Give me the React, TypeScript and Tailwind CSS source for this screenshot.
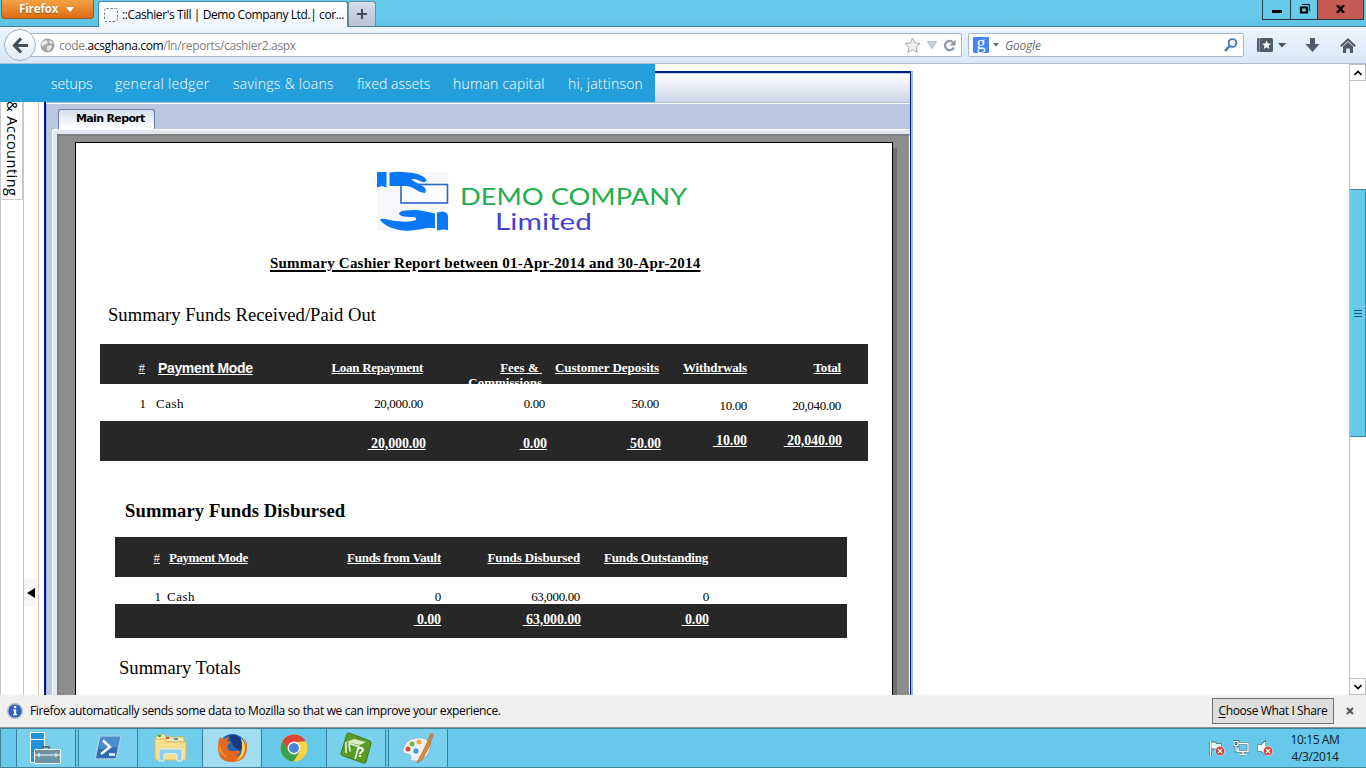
import React from "react";

const ui = "font-['Open_Sans','Noto_Sans',sans-serif]";
const serif = "font-['Liberation_Serif',serif]";

function BrowserTabs() {
  return (
    <header className="flex h-[27px] shrink-0 items-start justify-between border-b border-[#46879b] bg-linear-to-b from-[#66caea] from-60% to-[#5fbfe0]">
      <div className="flex h-[26px]">
        <div className="ml-px flex h-[19px] w-[93px] items-center gap-2 rounded-b-[4px] border border-t-0 border-[#9a5a22] bg-linear-to-b from-[#f4a243] to-[#dc6d10] pl-[17px] text-[11.5px] font-bold leading-none tracking-[-0.1px] text-white [text-shadow:0_1px_1px_#a04c00]">
          <span>Firefox</span>
          <svg width="8" height="5" viewBox="0 0 8 5"><path d="M0 0h8L4 5z" fill="#fff" /></svg>
        </div>
        <div className="ml-[4px] mt-[1px] flex h-[26px] w-[250px] items-center rounded-t-[3px] border border-b-0 border-[#46879b] bg-linear-to-b from-white to-[#eef5fd] pl-[5px]">
          <svg className="shrink-0" width="14" height="14" viewBox="0 0 14 14"><rect x=".5" y=".5" width="13" height="13" rx="2" fill="none" stroke="#777" strokeDasharray="2.4 1.6" /></svg>
          <span className="ml-[4px] whitespace-nowrap text-[12px] leading-none tracking-[-0.4px] text-black">::Cashier's Till | Demo Company Ltd.| cor...</span>
        </div>
        <div className="mt-[1px] flex h-[25px] w-[28px] items-center justify-center rounded-t-[3px] border border-b-0 border-[#6c8fa0] bg-linear-to-b from-[#d5deea] to-[#b9c3d3]">
          <svg width="10" height="10" viewBox="0 0 10 10"><path d="M4 0h2v4h4v2H6v4H4V6H0V4h4z" fill="#3f4a56" /></svg>
        </div>
      </div>
      <div className="flex h-[20px]">
        <div className="flex w-[29px] items-center justify-center border border-t-0 border-[#283a42]">
          <svg width="10" height="8"><path d="M0 4h10v3H0z" /></svg>
        </div>
        <div className="flex w-[26px] items-center justify-center border-b border-[#283a42] pb-[2px]">
          <svg width="11" height="11"><path d="M3 1.5h7.5V8" fill="none" stroke="#000" /><path d="M2 4.5h6v5H2z" fill="none" stroke="#000" strokeWidth="2.2" /></svg>
        </div>
        <div className="mr-[2px] flex w-[47px] items-center justify-center border border-t-0 border-[#283a42] bg-[#c45a52] pb-[2px]">
          <svg width="9" height="8"><path d="M1 0l7 8M8 0L1 8" stroke="#000" strokeWidth="2.4" /></svg>
        </div>
      </div>
    </header>
  );
}

function AddressBar() {
  return (
    <div className="flex h-[37px] shrink-0 items-center border-b border-[#a9bdd3] bg-linear-to-b from-[#edf5fd] to-[#d9e8f7]">
      <div className="z-10 ml-[4px] flex size-[32px] shrink-0 items-center justify-center rounded-full border border-[#9eb0c4] bg-linear-to-b from-white to-[#e3edf8]">
        <svg width="17" height="17" viewBox="0 0 17 17"><path d="M9 1.5L2.5 8.5L9 15.500M3 8.500H16" fill="none" stroke="#414f5e" strokeWidth="3.2" /></svg>
      </div>
      <div className="-ml-[8px] flex h-[24px] w-[934px] items-center rounded-[2px] border border-[#a5b9ce] bg-white pl-[11px]">
        <svg width="15" height="15" viewBox="0 0 15 15"><circle cx="7.500" cy="7.500" r="7" fill="#a5a5a5" /><path d="M2 4l4-2 2 2-1 2-3 1-1 2-2-2zM7 8l4-1 1 2-3 4-2-1zM10 2l3 3-2 1-2-2z" fill="#e6e6e6" /></svg>
        <span className="ml-[4px] whitespace-nowrap pt-[2px] text-[12px] leading-none tracking-[-0.34px] text-[#808080]">
          code.<span className="text-black">acsghana.com</span>/ln/reports/cashier2.aspx
        </span>
        <div className="ml-auto flex items-center gap-[6px] pr-[5px]">
          <svg width="17" height="17" viewBox="0 0 17 17"><path d="M8.500 1l2.200 5 5.300.5-4 3.700 1.200 5.300-4.700-2.800-4.700 2.800L5 10.200 1 6.500 6.300 6z" fill="#f1f1f1" stroke="#aaa" /></svg>
          <svg width="10" height="8"><path d="M.5.5h9L5 7.500z" fill="#cbd2da" stroke="#b3bcc6" /></svg>
          <svg width="13" height="13" viewBox="0 0 13 13"><path d="M9.800 3.200A4.600 4.600 0 1 0 10.800 8.500" fill="none" stroke="#8a96a4" strokeWidth="2.200" /><path d="M12.500.5v6h-6z" fill="#8a96a4" /></svg>
        </div>
      </div>
      <div className="ml-[6px] flex h-[24px] w-[276px] items-center rounded-[2px] border border-[#a5b9ce] bg-white pl-[4px] pr-[5px]">
        <div className={`flex size-[16px] items-center justify-center rounded-[1px] bg-[#4285f4] pb-[4px] text-[18px] leading-none text-white ${serif}`}>g</div>
        <svg className="ml-[4px]" width="6" height="4"><path d="M0 0h6L3 3.500z" fill="#666" /></svg>
        <span className="ml-[6px] pt-[2px] text-[12px] italic leading-none tracking-[-0.2px] text-[#6b6b6b]">Google</span>
        <svg className="ml-auto" width="14" height="14" viewBox="0 0 14 14"><circle cx="8.500" cy="5" r="3.900" fill="none" stroke="#3c76b4" strokeWidth="1.800" /><path d="M5.700 8L1 13" stroke="#3c76b4" strokeWidth="2.400" /></svg>
      </div>
      <svg className="ml-[13px]" width="16" height="14" viewBox="0 0 16 14"><rect width="16" height="14" rx="1.500" fill="#4e5d6c" /><path d="M2.500 0v14" stroke="#8c98a5" /><path d="M9.500 2.500l1.300 3 3.200.2-2.500 2 .8 3.300-2.800-1.800L6.700 11l.8-3.300-2.500-2 3.200-.2z" fill="#fff" /></svg>
      <svg className="ml-[5px]" width="8" height="5"><path d="M0 0h8L4 4.500z" fill="#44515e" /></svg>
      <svg className="ml-[19px]" width="15" height="14" viewBox="0 0 15 14"><path d="M5 0h5v6h4.500L7.500 14 .5 6H5z" fill="#4e5b69" /></svg>
      <svg className="ml-[20px]" width="16" height="15" viewBox="0 0 16 15"><path d="M.8 8.300L8 1.500l7.200 6.800" fill="none" stroke="#4e5b69" strokeWidth="2" /><path d="M3 8.500L8 4l5 4.500V15H9.800v-4.500H6.200V15H3z" fill="#4e5b69" /></svg>
    </div>
  );
}

function SiteMenu() {
  return (
    <nav className="absolute left-0 top-0 z-20 flex h-[38px] w-[655px] items-center whitespace-nowrap bg-[#259fdc] pl-[51px] text-[14px] font-light text-white">
      <span className="w-[64px] tracking-[-0.1px]">setups</span>
      <span className="w-[118px] tracking-[0.3px]">general ledger</span>
      <span className="w-[124px] tracking-[0.3px]">savings &amp; loans</span>
      <span className="w-[96px]">fixed assets</span>
      <span className="w-[115px] tracking-[0.2px]">human capital</span>
      <span className="tracking-[0.2px]">hi, jattinson</span>
    </nav>
  );
}

function Sidebar() {
  return (
    <aside className="flex w-[44px] shrink-0">
      <div className="w-[24px] border-x border-[#c9c9c9]">
        <div className="flex h-[136px] items-end justify-center border-b border-r border-[#c9c9c9] pb-[3px]">
          <span className="whitespace-nowrap text-[14.500px] leading-[18px] tracking-[0.5px] text-black [writing-mode:vertical-rl]">&amp; Accounting</span>
        </div>
      </div>
      <div className="w-[15px] border-r border-[#c9c9c9] pt-[515px]">
        <div className="flex h-[27px] items-center justify-center bg-[#f7f7f7]">
          <svg width="8" height="10"><path d="M8 0v10L0 5z" /></svg>
        </div>
      </div>
    </aside>
  );
}

function Logo() {
  return (
    <svg className="ml-[301px] mt-[28px] block" width="312" height="66" viewBox="0 0 312 66">
      <rect width="71" height="59" y="1" fill="#f5f7fa" />
      <rect x="24" y="13.500" width="46.500" height="18.500" fill="#fbfcff" stroke="#2a68c0" strokeWidth="1.600" />
      <path d="M0 1h9.500v15.500L5 15l-5 1.500z" fill="#0a78f5" />
      <path d="M12.500 1.500Q20 0 31 1.500q8 .5 12 2.500 7 3 6.500 6-2 2-5 .5L38 8l-4 .5L47 16q3 2.500 1 6l-5-1-8-4.500q-3-1.500-6-1.500h-8l-8.500 0z" fill="#0a78f5" />
      <path d="M22 42.500q1-3 7-3 10-1 17 .5l12 2.500V57l-8 0-8 1.500q-10 2-20 .5Q8 56 3 49q1-2 5-1 8 2 17 2.500 8 1 14-1.500 1-3-3-3-8 0-11-1-3-1-3-2.500z" fill="#0a78f5" />
      <path d="M60 41.500l6-1q5 1 5 5V59l-5-.5-6 1z" fill="#0a78f5" />
      <text x="83" y="34" textLength="227" lengthAdjust="spacingAndGlyphs" fontFamily="Lato, sans-serif" fontSize="23.500" fill="#22ae50">DEMO COMPANY</text>
      <text x="118" y="59" textLength="97" lengthAdjust="spacingAndGlyphs" fontFamily="Lato, sans-serif" fontSize="22.500" fill="#4343cf">Limited</text>
    </svg>
  );
}

type CellProps = { className: string; children?: React.ReactNode };
const Cell = ({ className, children }: CellProps) => (
  <div className={`shrink-0 whitespace-pre text-right ${className}`}>{children}</div>
);

function FundsReceived() {
  const value = "text-[13px] tracking-[-0.35px]";
  return (
    <section className="ml-[24px] w-[768px] leading-[15px]">
      <div className="flex h-[40px] overflow-hidden bg-[#272727] pt-[16px] text-[13px] font-bold text-white underline">
        <Cell className="w-[45px] font-normal">#</Cell>
        <Cell className="w-[13px]" />
        <div className="w-[160px] pt-px font-['Liberation_Sans',sans-serif] text-[14px] tracking-[-0.35px]">Payment Mode</div>
        <Cell className="w-[105px] tracking-[-0.3px]">Loan Repayment</Cell>
        <Cell className="w-[119px]">{"Fees & \nCommissions"}</Cell>
        <Cell className="w-[117px] tracking-[-0.05px]">Customer Deposits</Cell>
        <Cell className="w-[88px] tracking-[-0.15px]">Withdrwals</Cell>
        <Cell className="w-[94px] tracking-[-0.2px]">Total</Cell>
      </div>
      <div className="flex h-[37px] pt-[12px] text-[13px] text-black">
        <Cell className="w-[46px]">1</Cell>
        <Cell className="w-[10px]" />
        <div className="w-[100px] tracking-[0.5px]">Cash</div>
        <Cell className={`w-[167px] ${value}`}>20,000.00</Cell>
        <Cell className={`w-[122px] ${value}`}>0.00</Cell>
        <Cell className={`w-[114px] ${value}`}>50.00</Cell>
        <Cell className={`w-[88px] pt-[2px] ${value}`}>10.00</Cell>
        <Cell className={`w-[94px] pt-[2px] ${value}`}>20,040.00</Cell>
      </div>
      <div className="flex h-[40px] bg-[#272727] pt-[12px] text-[14px] font-bold tracking-[-0.12px] text-white underline">
        <Cell className="w-[326px] pt-[3px]"> 20,000.00</Cell>
        <Cell className="w-[121px] pt-[3px]"> 0.00</Cell>
        <Cell className="w-[114px] pt-[3px]"> 50.00</Cell>
        <Cell className="w-[86px]"> 10.00</Cell>
        <Cell className="w-[95px]"> 20,040.00</Cell>
      </div>
    </section>
  );
}

function FundsDisbursed() {
  const value = "text-[13px] tracking-[-0.35px]";
  return (
    <section className="ml-[39px] w-[732px] leading-[15px]">
      <div className="flex h-[40px] bg-[#272727] pt-[13px] text-[13px] font-bold text-white underline">
        <Cell className="w-[45px] font-normal">#</Cell>
        <Cell className="w-[9px]" />
        <div className="w-[100px] tracking-[-0.45px]">Payment Mode</div>
        <Cell className="w-[172px] tracking-[-0.25px]">Funds from Vault</Cell>
        <Cell className="w-[139px] tracking-[-0.12px]">Funds Disbursed</Cell>
        <Cell className="w-[128px] tracking-[-0.2px]">Funds Outstanding</Cell>
      </div>
      <div className="flex h-[27px] pt-[12px] text-[13px] text-black">
        <Cell className="w-[46px]">1</Cell>
        <Cell className="w-[6px]" />
        <div className="w-[100px] tracking-[0.5px]">Cash</div>
        <Cell className={`w-[174px] ${value}`}>0</Cell>
        <Cell className={`w-[139px] ${value}`}>63,000.00</Cell>
        <Cell className={`w-[129px] ${value}`}>0</Cell>
      </div>
      <div className="flex h-[34px] bg-[#272727] pt-[8px] text-[14px] font-bold tracking-[-0.12px] text-white underline">
        <Cell className="w-[326px]"> 0.00</Cell>
        <Cell className="w-[140px]"> 63,000.00</Cell>
        <Cell className="w-[128px]"> 0.00</Cell>
      </div>
    </section>
  );
}

function ReportPage() {
  return (
    <article className={`h-[560px] w-[818px] overflow-hidden border border-b-0 border-black bg-white text-black shadow-[4px_6px_0_#707070] ${serif}`}>
      <Logo />
      <h1 className="mt-[16px] h-[21px] whitespace-nowrap pl-[194px] text-[15px] font-bold leading-[20px] tracking-[0.22px] underline decoration-[1.500px] underline-offset-2">
        Summary Cashier Report between 01-Apr-2014 and 30-Apr-2014
      </h1>
      <h2 className="mt-[30px] h-[22px] pl-[32px] text-[18.600px] leading-[22px] tracking-[0.03px]">Summary Funds Received/Paid Out</h2>
      <div className="h-[18px]" />
      <FundsReceived />
      <h2 className="mt-[39px] h-[22px] pl-[49px] text-[18.600px] font-bold leading-[22px] tracking-[0.1px]">Summary Funds Disbursed</h2>
      <div className="h-[15px]" />
      <FundsDisbursed />
      <h2 className="mt-[19px] h-[22px] pl-[43px] text-[18.600px] leading-[22px]">Summary Totals</h2>
    </article>
  );
}

function ReportViewer() {
  return (
    <main className="mt-[7px] flex w-[869px] shrink-0 flex-col border-r-[2px] border-r-[#a5b5f0]">
      <div className="flex flex-1 flex-col border-l-[2px] border-r border-t-[2px] border-[#001c7c]">
        <div className="h-[30px] shrink-0 border-b border-t border-b-[#b3bdcc] border-t-[#c8d4f0] bg-linear-to-b from-white to-[#cbd7e7]" />
        <div className="flex flex-1 flex-col border-t border-l-[1px] border-t-white border-l-[#9fb0e8] bg-[#b9c8de] pl-[5px]">
          <div className="flex h-[25px] shrink-0 items-end pl-[6px]">
            <div className="h-[20px] w-[97px] rounded-t-[3px] border border-b-0 border-[#6c7fa8] bg-linear-to-b from-[#d5dfec] to-white pl-[17px] font-['DejaVu_Sans','Open_Sans',sans-serif] text-[11px] font-bold leading-[17px] tracking-[-0.65px] text-black">
              <span className="whitespace-nowrap">Main Report</span>
            </div>
          </div>
          <div className="flex flex-1 flex-col rounded-tl-[3px] border-l border-t border-white bg-[#e3e7f1] pl-[4px] pt-[4px]">
            <div className="flex-1 border-l-[2px] border-r border-t-[2px] border-l-[#7d8182] border-r-white border-t-[#7d8182] bg-[#8e8e8e] pl-[16px] pt-[6px]">
              <ReportPage />
            </div>
          </div>
        </div>
      </div>
    </main>
  );
}

function Scrollbar() {
  return (
    <div className="ml-auto flex w-[17px] shrink-0 flex-col border-l border-[#bfbfbf]">
      <div className="flex h-[17px] items-center justify-center border border-l-0 border-[#bfbfbf]">
        <svg width="8" height="6"><path d="M.5 5L4 1.500 7.500 5" fill="none" stroke="#000" strokeWidth="1.600" /></svg>
      </div>
      <div className="h-[108px]" />
      <div className="flex h-[248px] flex-col items-center justify-center gap-[2px] border border-l-0 border-[#3d8cab] bg-[#66c9e9]">
        <i className="h-px w-[8px] bg-[#16547a]" />
        <i className="h-px w-[8px] bg-[#16547a]" />
        <i className="h-px w-[8px] bg-[#16547a]" />
      </div>
      <div className="mt-auto flex h-[17px] items-center justify-center border border-l-0 border-[#bfbfbf]">
        <svg width="8" height="6"><path d="M.5 1L4 4.500 7.500 1" fill="none" stroke="#000" strokeWidth="1.600" /></svg>
      </div>
    </div>
  );
}

function NotificationBar() {
  return (
    <div className="flex h-[33px] shrink-0 items-center border-b border-[#8b8f92] bg-[#f0f0f0] pl-[7px] text-[12px] leading-none text-black">
      <svg width="16" height="16" viewBox="0 0 16 16"><circle cx="8" cy="8" r="7.300" fill="#2a62bd" stroke="#b5bac2" strokeWidth="1.400" /><path d="M7 3h2.200v2.200H7zM6 6.500h3.200V11H10v1.300H6V11h1V7.800H6z" fill="#fff" /></svg>
      <span className="ml-[7px] whitespace-nowrap tracking-[-0.35px]">Firefox automatically sends some data to Mozilla so that we can improve your experience.</span>
      <div className="ml-auto flex h-[26px] w-[122px] items-center justify-center border border-[#707070] bg-[#dedede] tracking-[-0.38px]">
        <span className="whitespace-nowrap"><span className="underline underline-offset-2">C</span>hoose What I Share</span>
      </div>
      <svg className="ml-[12px] mr-[12px]" width="8" height="8"><path d="M1 1l6 6M7 1L1 7" stroke="#555" strokeWidth="2" /></svg>
    </div>
  );
}

function ServerIcon() {
  return (
    <svg width="34" height="34" viewBox="0 0 34 34">
      <path d="M1.500 1.500h14v30h-14z" fill="#2292dc" stroke="#fff" /><path d="M2 8.500h13" stroke="#fff" />
      <path d="M13 18v-2h7v2" fill="none" stroke="#557889" strokeWidth="2" />
      <rect x="5.500" y="18.500" width="26" height="14" rx="1" fill="#6f93a6" stroke="#fff" /><path d="M6 24h25M10 22v4M27 22v4" stroke="#fff" />
    </svg>
  );
}

function PowerShellIcon() {
  return (
    <svg width="28" height="26" viewBox="0 0 28 26">
      <path d="M6 1h21l-5 23H1z" fill="#2e6db0" stroke="#a6cce8" strokeWidth="1.500" /><path d="M7 2h19l-2 10L5 14z" fill="#4a8fcc" />
      <path d="M9 5.500l7 6.500L7 19M15 19.500h6" fill="none" stroke="#fff" strokeWidth="2.400" />
    </svg>
  );
}

function ExplorerIcon() {
  return (
    <svg width="33" height="30" viewBox="0 0 33 30">
      <path d="M2 3l8-2 2 3h18v5H2z" fill="#f7eaa8" stroke="#cfb558" /><path d="M4 2h3v2H4z" fill="#39a845" /><path d="M12 4h3v2h-3z" fill="#d14d31" /><path d="M20 5h4v2h-4z" fill="#3a97d6" />
      <path d="M1 6h10l2 3h19v18H1z" fill="#f6e08c" stroke="#d6ba62" />
      <path d="M5 28V18q0-2 2-2h19q2 0 2 2v10h-5v-6q0-1.500-1.500-1.500h-10Q10 20.500 10 22v6z" fill="#8bd0ec" stroke="#d8f2fb" />
    </svg>
  );
}

function FirefoxIcon() {
  return (
    <svg width="30" height="30" viewBox="0 0 30 30">
      <circle cx="15.500" cy="14.500" r="13.500" fill="#2465b2" /><path d="M12 3q7-3 12 3 3 7-1 12l-6-4z" fill="#15397d" />
      <path d="M3 4q1 2 4 2 3-2 6-2-3 2-3 4 3 0 3 2-3 2-3 4 1 5 7 4 5-1 6 1-2 4-7 4 10 1 12-8 2-7-2-11 5 4 4 11-1 14-15 14Q1 29 1 15 1 8 3 4z" fill="#e66a1e" />
      <path d="M24 5q5 5 4 11-1 9-9 12 6-6 6-13 0-6-1-10z" fill="#fbd24b" /><path d="M3 10q0 11 9 15-8-1-10-9z" fill="#f39a32" />
    </svg>
  );
}

function ChromeIcon() {
  return (
    <svg width="28" height="28" viewBox="0 0 28 28">
      <circle cx="14" cy="14" r="13.500" fill="#fbd33b" /><path d="M2.300 7.250A13.500 13.500 0 0 1 25.700 7.250L14 8 8.200 17z" fill="#dc4237" />
      <path d="M2.300 7.250A13.500 13.500 0 0 0 13.500 27.500L20 17 8 16z" fill="#39a24a" />
      <circle cx="14" cy="14" r="6.400" fill="#fff" /><circle cx="14" cy="14" r="5" fill="#4684d8" />
    </svg>
  );
}

function HelpCubeIcon() {
  return (
    <svg width="34" height="34" viewBox="0 0 34 34">
      <path d="M10 2l21 8q1.500 1 1 2.500L27 31q-1 1.500-2.500 1L3 24.500q-1.500-1-1-2.500L8 3q.5-1.500 2-1z" fill="#5a9c26" stroke="#3f7a17" />
      <path d="M7 11l8-3 12 3-6 3z" fill="#dcecc9" /><path d="M7 11v11M10 12.500l1 8M20 14.500L16 28M10 12.500l10 3" fill="none" stroke="#eef6e4" strokeWidth="1.600" />
      <text x="17" y="26" fontSize="14" fontWeight="700" fill="#fff" fontFamily="Liberation Sans, sans-serif">?</text>
    </svg>
  );
}

function PaintIcon() {
  return (
    <svg width="33" height="32" viewBox="0 0 33 32">
      <path d="M13 6q13-2 15 7 1 7-5 12-5 5-13 4-2-1-1-4 0-3-4-3-5 0-4-5Q3 8 13 6z" fill="#e9f1f7" stroke="#8eb7cf" />
      <circle cx="6" cy="17" r="2.500" fill="#e0473b" /><circle cx="10" cy="12" r="2.500" fill="#74b943" /><circle cx="17" cy="10" r="2.500" fill="#f0ad35" /><circle cx="14" cy="19" r="2.600" fill="#3b9bd0" />
      <path d="M26 9L17 27l-2 4 5-3 9-17z" fill="#e28a35" stroke="#b86623" strokeWidth=".7" /><path d="M25 9l3-8 4 1-3 9z" fill="#b9885b" />
    </svg>
  );
}

function ErrorBadge() {
  return (
    <g><circle cx="11" cy="11" r="4.700" fill="#d93a32" stroke="#fff" strokeWidth=".6" /><path d="M9 9l4 4M13 9l-4 4" stroke="#fff" strokeWidth="1.400" /></g>
  );
}

function Taskbar() {
  const slot = "flex items-center justify-center border-[#37819d]";
  return (
    <footer className="flex h-[40px] shrink-0 border-y border-[#3f7f98] bg-[#66c9e9]">
      <div className="w-[16px] border-l border-[#3f7f98]" />
      <div className={`${slot} w-[60px] border-x bg-[#78d0ed]`}><ServerIcon /></div>
      <div className="w-[2px]" />
      <div className={`${slot} w-[60px] border-x bg-[#78d0ed]`}><PowerShellIcon /></div>
      <div className={`${slot} w-[64px] bg-[#6fcdeb]`}><ExplorerIcon /></div>
      <div className={`${slot} w-[60px] border-x bg-[#a0ddf2]`}><FirefoxIcon /></div>
      <div className={`${slot} w-[64px]`}><ChromeIcon /></div>
      <div className={`${slot} w-[60px] border-x bg-[#78d0ed]`}><HelpCubeIcon /></div>
      <div className="w-[2px]" />
      <div className={`${slot} w-[60px] border-x bg-[#78d0ed]`}><PaintIcon /></div>
      <div className="ml-auto flex items-center gap-[8px]">
        <svg width="16" height="16" viewBox="0 0 16 16"><path d="M1.500 1v15" stroke="#4b6670" strokeWidth="2.400" /><path d="M2 2h5v1.500h5.500v7H7V9H2z" fill="#e6f7fc" stroke="#4b6670" strokeWidth=".8" /><path d="M1.500 1v15" stroke="#fff" strokeWidth="1.200" /><ErrorBadge /></svg>
        <svg width="16" height="16" viewBox="0 0 16 16"><path d="M6 3.500h9v8H5V8M7 14.500h6M10 12v2M1 1.500h4v4H1zM3 6v5h2" fill="none" stroke="#4b6670" strokeWidth="2.600" /><path d="M6 3.500h9v8H5V8M7 14.500h6M10 12v2" fill="none" stroke="#fff" strokeWidth="1.400" /><path d="M1 1.500h4v4H1zM3 6v5h2" fill="none" stroke="#fff" strokeWidth="1.200" /></svg>
        <svg width="16" height="16" viewBox="0 0 16 16"><path d="M1.500 5.500h3L8 2v12l-3.500-3.500h-3z" fill="#e6f7fc" stroke="#4b6670" strokeWidth="2" /><path d="M1.500 5.500h3L8 2v12l-3.500-3.500h-3z" fill="#e6f7fc" stroke="#fff" /><ErrorBadge /></svg>
      </div>
      <div className="ml-[11px] mr-[20px] flex w-[62px] flex-col items-center whitespace-nowrap pt-[2px] text-[12px] leading-[17px] tracking-[-0.4px] text-[#0b1c24]">
        <span>10:15 AM</span>
        <span>4/3/2014</span>
      </div>
    </footer>
  );
}

export default function App() {
  return (
    <div className={`flex h-[768px] w-[1366px] flex-col overflow-hidden bg-white ${ui}`}>
      <BrowserTabs />
      <AddressBar />
      <div className="relative flex h-[631px] shrink-0 overflow-hidden">
        <SiteMenu />
        <Sidebar />
        <ReportViewer />
        <Scrollbar />
      </div>
      <NotificationBar />
      <Taskbar />
    </div>
  );
}
